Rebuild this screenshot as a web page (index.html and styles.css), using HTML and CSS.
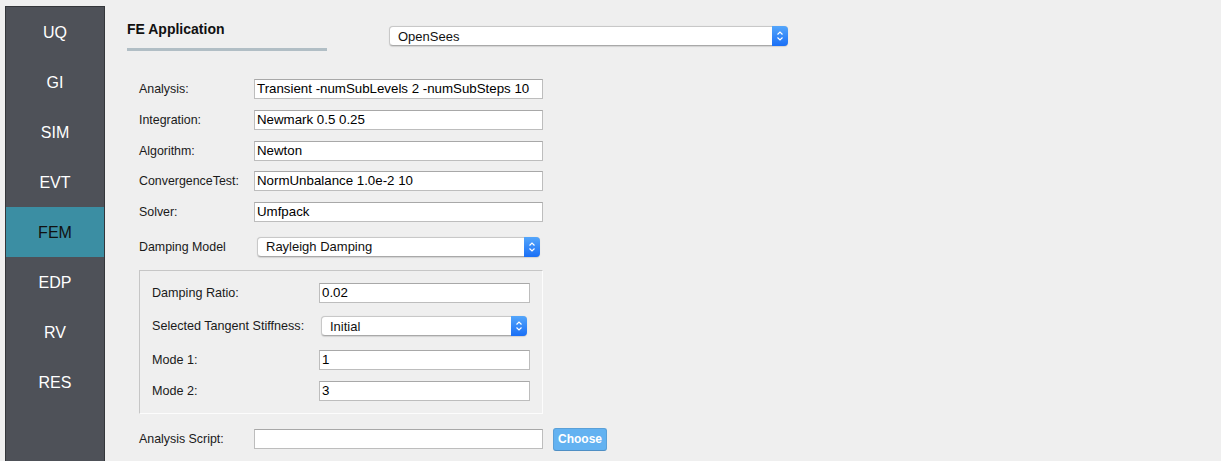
FILE: index.html
```html
<!DOCTYPE html>
<html>
<head>
<meta charset="utf-8">
<title>FE Application</title>
<link rel="stylesheet" href="styles.css">
</head>
<body>
<div class="app">
  <nav class="sidebar">
    <div class="nav-item">UQ</div>
    <div class="nav-item">GI</div>
    <div class="nav-item">SIM</div>
    <div class="nav-item">EVT</div>
    <div class="nav-item active">FEM</div>
    <div class="nav-item">EDP</div>
    <div class="nav-item">RV</div>
    <div class="nav-item">RES</div>
  </nav>
  <main class="main">
    <div class="header">
      <div class="title-block">
        <div class="title">FE Application</div>
        <div class="title-bar"></div>
      </div>
      <div class="combo combo-app">
        <span class="combo-text">OpenSees</span>
        <span class="combo-arrows"><svg width="8" height="12" viewBox="0 0 8 12"><path d="M1.5 4.5 L4 2 L6.5 4.5 M1.5 7.5 L4 10 L6.5 7.5" fill="none" stroke="#fff" stroke-width="1.2"/></svg></span>
      </div>
    </div>

    <div class="form">
      <div class="row"><span class="lbl">Analysis:</span><div class="field">Transient -numSubLevels 2 -numSubSteps 10</div></div>
      <div class="row"><span class="lbl">Integration:</span><div class="field">Newmark 0.5 0.25</div></div>
      <div class="row"><span class="lbl">Algorithm:</span><div class="field">Newton</div></div>
      <div class="row"><span class="lbl">ConvergenceTest:</span><div class="field">NormUnbalance 1.0e-2 10</div></div>
      <div class="row"><span class="lbl">Solver:</span><div class="field">Umfpack</div></div>

      <div class="row row-damping">
        <span class="lbl lbl-wide">Damping Model</span>
        <div class="combo combo-damping">
          <span class="combo-text">Rayleigh Damping</span>
          <span class="combo-arrows"><svg width="8" height="12" viewBox="0 0 8 12"><path d="M1.5 4.5 L4 2 L6.5 4.5 M1.5 7.5 L4 10 L6.5 7.5" fill="none" stroke="#fff" stroke-width="1.2"/></svg></span>
        </div>
      </div>

      <div class="group">
        <div class="grow g1"><span class="glbl">Damping Ratio:</span><div class="field gfield">0.02</div></div>
        <div class="grow g2"><span class="glbl glbl-combo">Selected Tangent Stiffness:</span>
          <div class="combo combo-tangent">
            <span class="combo-text">Initial</span>
            <span class="combo-arrows"><svg width="8" height="12" viewBox="0 0 8 12"><path d="M1.5 4.5 L4 2 L6.5 4.5 M1.5 7.5 L4 10 L6.5 7.5" fill="none" stroke="#fff" stroke-width="1.2"/></svg></span>
          </div>
        </div>
        <div class="grow g3"><span class="glbl">Mode 1:</span><div class="field gfield">1</div></div>
        <div class="grow g4"><span class="glbl">Mode 2:</span><div class="field gfield">3</div></div>
      </div>

      <div class="row row-script">
        <span class="lbl">Analysis Script:</span>
        <div class="field"></div>
        <button class="choose">Choose</button>
      </div>
    </div>
  </main>
</div>
</body>
</html>
```

FILE: styles.css
```css
html, body {
  margin: 0;
  padding: 0;
  height: 100%;
  overflow: hidden;
}
body {
  background: #efefef;
  font-family: "Liberation Sans", Arial, sans-serif;
  color: #111;
}
.app {
  display: flex;
  height: 100%;
}
.sidebar {
  margin: 6px 0 0 5px;
  width: 100px;
  height: calc(100% - 6px);
  box-sizing: border-box;
  background: #4e5158;
  border: 1px solid #34363a;
  border-bottom: none;
  display: flex;
  flex-direction: column;
  flex-shrink: 0;
}
.nav-item {
  height: 50px;
  display: flex;
  align-items: center;
  justify-content: center;
  color: #fff;
  font-size: 16px;
  padding-top: 1px;
  box-sizing: border-box;
}
.nav-item.active {
  background: #3b8ea3;
  color: #111;
}
.main {
  flex: 1;
  padding-left: 22px;
}
.header {
  display: flex;
  align-items: flex-start;
}
.title-block {
  width: 200px;
  padding-top: 20px;
}
.title {
  font-size: 14px;
  font-weight: bold;
  line-height: 18px;
  color: #111;
}
.title-bar {
  margin-top: 10px;
  height: 3px;
  background: #b1bec5;
}
.combo {
  display: flex;
  align-items: center;
  height: 20px;
  box-sizing: border-box;
  background: #fff;
  border: 1px solid #c8c8c8;
  border-bottom-color: #a9a9a9;
  border-radius: 4px;
  box-shadow: 0 0.5px 1px rgba(0,0,0,0.12);
}
.combo-text {
  flex: 1;
  padding-left: 8px;
  font-size: 13px;
  color: #111;
}
.combo-arrows {
  width: 16px;
  height: 20px;
  margin: -1px -1px -1px 0;
  border-radius: 0 4px 4px 0;
  background: linear-gradient(#54a6fb, #1a6ff6);
  display: flex;
  align-items: center;
  justify-content: center;
}
.combo-app {
  margin-left: 62px;
  margin-top: 26px;
  width: 399px;
}
.form {
  margin-left: 12px;
  margin-top: 28px;
  display: flex;
  flex-direction: column;
  gap: 10.75px;
}
.row {
  display: flex;
  align-items: center;
  height: 20px;
}
.lbl {
  width: 115px;
  font-size: 12.4px;
  color: #1a1a1a;
}
.lbl-wide {
  width: 118px;
}
.field {
  width: 289px;
  height: 20px;
  box-sizing: border-box;
  background: #fff;
  border: 1px solid #bdbdbd;
  border-top-color: #a8a8a8;
  font-size: 13.3px;
  line-height: 18px;
  padding-left: 2px;
  color: #000;
  white-space: nowrap;
  overflow: hidden;
}
.row-damping {
  margin-top: 4px;
  height: 20px;
}
.combo-damping {
  width: 283px;
}
.group {
  margin-top: 2px;
  width: 404px;
  height: 144px;
  box-sizing: border-box;
  border: 1px solid #c6c6c6;
  border-right-color: #fcfcfc;
  border-bottom-color: #fcfcfc;
  padding: 12.5px 0 0 12px;
  display: flex;
  flex-direction: column;
}
.grow {
  display: flex;
  align-items: center;
  height: 20px;
}
.g2 { margin-top: 13.3px; }
.g3 { margin-top: 13.3px; }
.g4 { margin-top: 11.4px; }
.glbl {
  width: 167px;
  font-size: 12.6px;
  color: #1a1a1a;
}
.glbl-combo {
  width: 169px;
}
.gfield {
  width: 211px;
}
.combo-tangent {
  width: 206px;
}
.row-script {
  margin-top: 5px;
}
.choose {
  margin-left: 10px;
  width: 54px;
  height: 23px;
  box-sizing: border-box;
  background: #63b2f1;
  border: 1px solid #5aa0d8;
  border-bottom-color: #4f8fc4;
  border-radius: 3px;
  color: #fff;
  font-family: "Liberation Sans", Arial, sans-serif;
  font-weight: bold;
  font-size: 12px;
  padding: 0;
}
```
